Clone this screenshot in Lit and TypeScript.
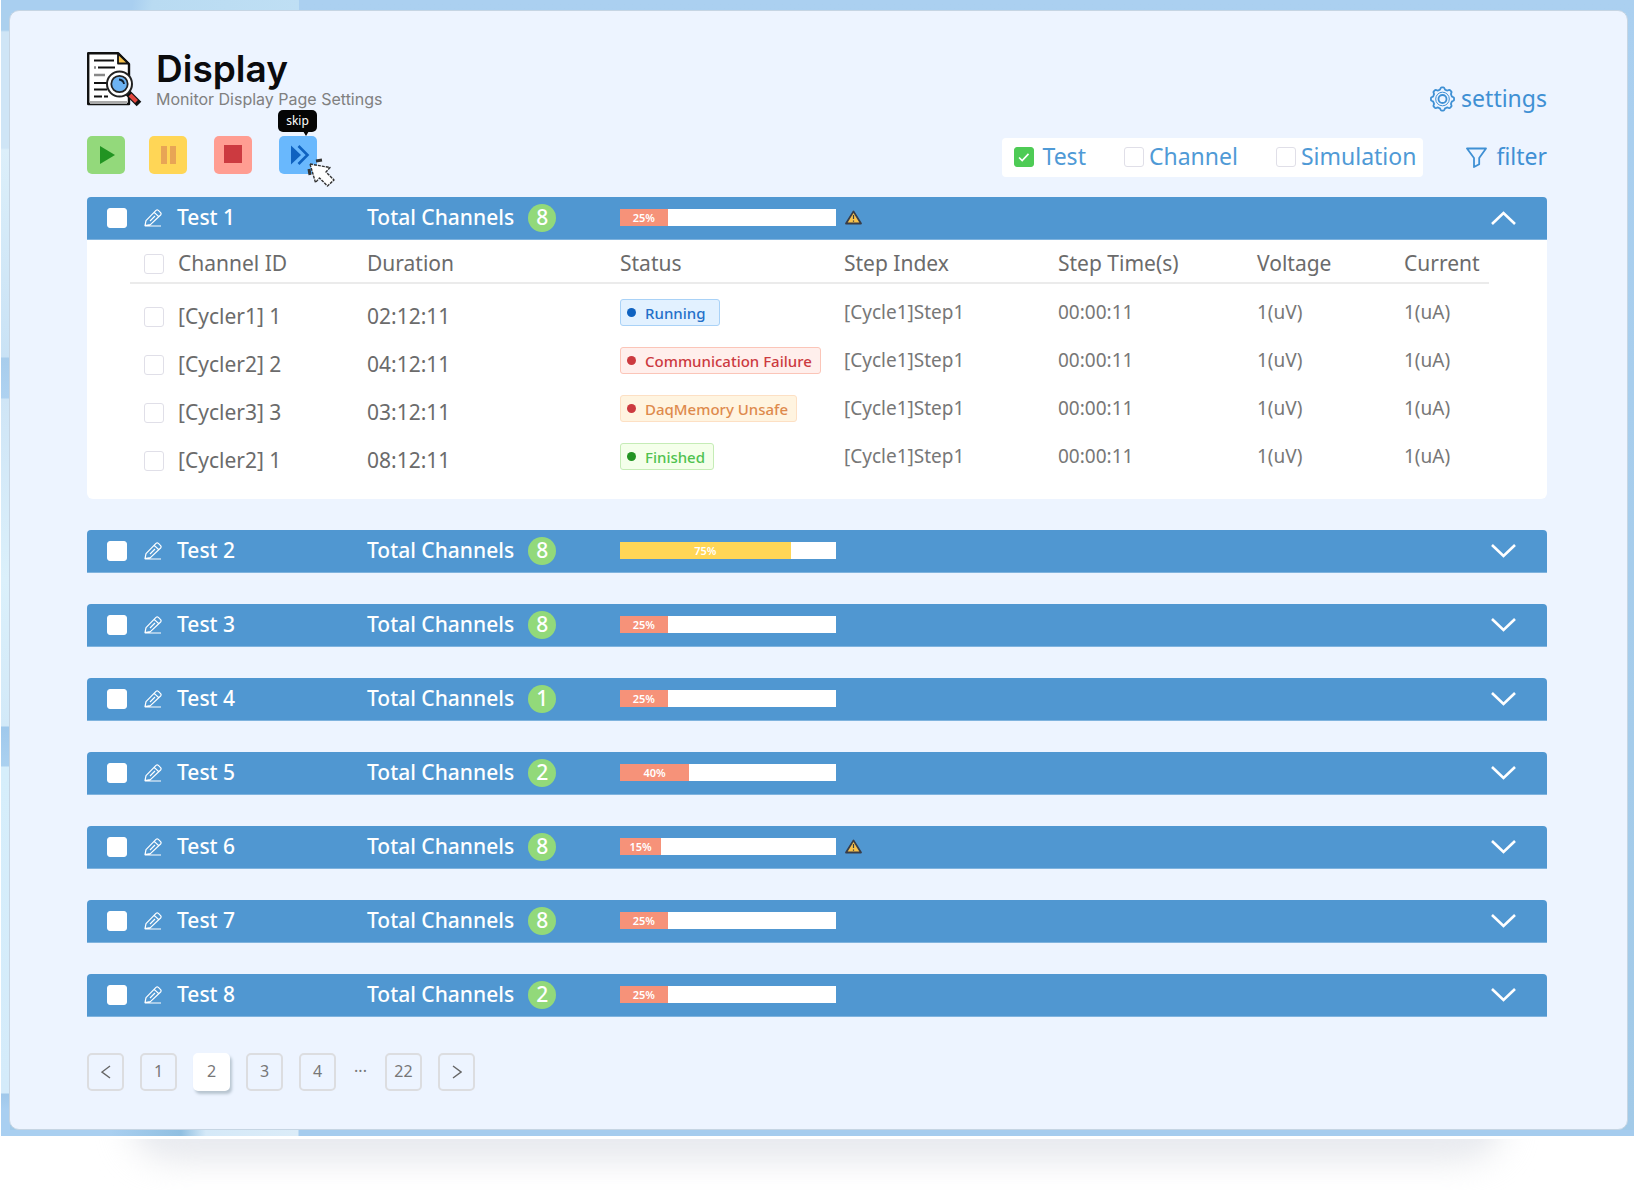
import { LitElement, html, svg, css, nothing } from "lit";
import { customElement, property } from "lit/decorators.js";
import { classMap } from "lit/directives/class-map.js";
import { styleMap } from "lit/directives/style-map.js";

interface Channel {
  id: string;
  duration: string;
  status: string;
  tone: "info" | "error" | "warn" | "ok";
}

interface TestGroup {
  name: string;
  total: number;
  percent: number;
  fill: number;
  caution?: boolean;
  amber?: boolean;
  channels?: Channel[];
}

const GROUPS: TestGroup[] = [
  {
    name: "Test 1", total: 8, percent: 25, fill: 22, caution: true,
    channels: [
      { id: "[Cycler1] 1", duration: "02:12:11", status: "Running", tone: "info" },
      { id: "[Cycler2] 2", duration: "04:12:11", status: "Communication Failure", tone: "error" },
      { id: "[Cycler3] 3", duration: "03:12:11", status: "DaqMemory Unsafe", tone: "warn" },
      { id: "[Cycler2] 1", duration: "08:12:11", status: "Finished", tone: "ok" },
    ],
  },
  { name: "Test 2", total: 8, percent: 75, fill: 79, amber: true },
  { name: "Test 3", total: 8, percent: 25, fill: 22 },
  { name: "Test 4", total: 1, percent: 25, fill: 22 },
  { name: "Test 5", total: 2, percent: 40, fill: 32 },
  { name: "Test 6", total: 8, percent: 15, fill: 19, caution: true },
  { name: "Test 7", total: 8, percent: 25, fill: 22 },
  { name: "Test 8", total: 2, percent: 25, fill: 22 },
];

const shared = css`
  * { box-sizing: border-box; }
  button {
    font: inherit;
    color: inherit;
    border: 0;
    padding: 0;
    background: none;
    cursor: pointer;
  }
  svg { display: block; }
  input[type="checkbox"] {
    appearance: none;
    flex: none;
    width: 20px;
    height: 20px;
    margin: 0;
    border: 1px solid #e0dfe8;
    border-radius: 3px;
    background: #fff;
  }
`;

@customElement("test-group")
class TestGroupPanel extends LitElement {
  @property({ attribute: false }) group!: TestGroup;

  static styles = [
    shared,
    css`
      :host { display: block; }
      .bar {
        display: grid;
        grid-template-columns: 260fr 253fr 871fr 25px;
        align-items: center;
        height: 43px;
        padding: 0 31px 0 20px;
        border-radius: 4px 4px 0 0;
        border-bottom: 1px solid #7fb3de;
        background: #5097d1;
        color: #fff;
        font-size: 21px;
        font-weight: 500;
      }
      .name, .total, .progress { display: flex; align-items: center; }
      .bar input { border-color: #fff; margin-right: 17px; }
      .edit { margin-right: 15px; }
      .count {
        display: grid;
        place-items: center;
        width: 28px;
        height: 28px;
        margin-left: 14px;
        border-radius: 50%;
        background: #92d97a;
      }
      .track { width: 216px; height: 17px; background: #fff; }
      .fill {
        height: 100%;
        background: #f69279;
        font-size: 11px;
        line-height: 17px;
        font-weight: 600;
        text-align: center;
      }
      .fill.amber { background: #ffd656; }
      .caution { margin-left: 8px; }
      .body {
        padding: 0 58px 18px 43px;
        border-radius: 0 0 6px 6px;
        background: #fff;
        color: #6b6b6b;
      }
      table {
        width: 100%;
        table-layout: fixed;
        border-collapse: collapse;
        text-align: left;
      }
      .c-id { width: 237px; }
      .c-duration { width: 253px; }
      .c-status { width: 224px; }
      .c-index { width: 214px; }
      .c-time { width: 199px; }
      .c-voltage { width: 147px; }
      .c-current { width: 85px; }
      th, td { padding: 0; white-space: nowrap; }
      th {
        height: 43px;
        padding-top: 6px;
        border-bottom: 2px solid #ebebeb;
        font-size: 21px;
        font-weight: 400;
      }
      td { height: 48px; font-size: 19px; color: #777; }
      .gap td { height: 6px; }
      .major { padding-top: 8px; font-size: 21px; color: #6b6b6b; }
      .pick { display: flex; align-items: center; gap: 14px; padding-left: 14px; }
      .tag {
        display: inline-flex;
        align-items: center;
        gap: 9px;
        height: 27px;
        padding: 0 8px 0 6px;
        border: 1px solid;
        border-radius: 3px;
        font-size: 15px;
        font-weight: 500;
        vertical-align: middle;
      }
      .dot { width: 9px; height: 9px; border-radius: 50%; background: #cc3a3f; }
      .info { background: #e2f1ff; border-color: #a9d2f7; color: #2470c9; padding-right: 14px; }
      .info .dot { background: #0f62c0; }
      .error { background: #ffefec; border-color: #fbc5b8; color: #cc3a3f; }
      .warn { background: #fff4e0; border-color: #fde0c4; color: #de8a4c; }
      .ok { background: #f4ffea; border-color: #c5ecb6; color: #4fc24f; }
      .ok .dot { background: #229422; }
    `,
  ];

  render() {
    const g = this.group;
    const open = Boolean(g.channels);
    return html`
      <div class="bar">
        <div class="name">
          <input type="checkbox" aria-label=${`Select ${g.name}`} />
          <button class="edit" aria-label=${`Rename ${g.name}`}>
            <svg width="18" height="18" viewBox="0 0 18 18" fill="none" stroke="#fff" stroke-width="1.2" stroke-linejoin="round">
              <path d="M1 16.6 2 11.6 12 1.4Q13.2.4 14.4 1.4L16.6 3.6Q17.6 4.8 16.6 6L6.4 15.6ZM10.2 3.4 14.8 7.8M6 12 11 7M1 17H17" />
            </svg>
          </button>
          <span>${g.name}</span>
        </div>
        <div class="total"><span>Total Channels</span><span class="count">${g.total}</span></div>
        <div class="progress">
          <div class="track">
            <div class=${classMap({ fill: true, amber: Boolean(g.amber) })} style=${styleMap({ width: `${g.fill}%` })}>${g.percent}%</div>
          </div>
          ${g.caution
            ? html`<svg class="caution" width="19" height="17" viewBox="0 0 19 17">
                <path d="M9.5 2.400 17 14.5H2Z" fill="#f6c14b" stroke="#383d49" stroke-width="1.800" stroke-linejoin="round" />
                <path d="M9.5 6V10M9.5 11.400V12.800" stroke="#383d49" stroke-width="1.200" />
              </svg>`
            : nothing}
        </div>
        <button aria-label=${open ? "Collapse" : "Expand"}>
          <svg width="25" height="14" viewBox="0 0 25 14" fill="none" stroke="#fff" stroke-width="2.6">
            <path d=${open ? "M1 13 12.5 2 24 13" : "M1 1 12.5 12 24 1"} />
          </svg>
        </button>
      </div>
      ${g.channels ? this.renderTable(g.channels) : nothing}
    `;
  }

  private renderTable(channels: Channel[]) {
    return html`
      <div class="body">
        <table>
          <colgroup>
            <col class="c-id" /><col class="c-duration" /><col class="c-status" /><col class="c-index" />
            <col class="c-time" /><col class="c-voltage" /><col class="c-current" />
          </colgroup>
          <thead>
            <tr>
              <th><label class="pick"><input type="checkbox" />Channel ID</label></th>
              <th>Duration</th>
              <th>Status</th>
              <th>Step Index</th>
              <th>Step Time(s)</th>
              <th>Voltage</th>
              <th>Current</th>
            </tr>
          </thead>
          <tbody>
            <tr class="gap" aria-hidden="true"><td colspan="7"></td></tr>
            ${channels.map(
              (c) => html`<tr>
                <td class="major"><label class="pick"><input type="checkbox" />${c.id}</label></td>
                <td class="major">${c.duration}</td>
                <td><span class="tag ${c.tone}"><span class="dot"></span>${c.status}</span></td>
                <td>[Cycle1]Step1</td>
                <td>00:00:11</td>
                <td>1(uV)</td>
                <td>1(uA)</td>
              </tr>`
            )}
          </tbody>
        </table>
      </div>
    `;
  }
}

/** Outline of a cog with rounded lobes, centred on (cx, cy). */
function cogPath(cx: number, cy: number, radius: number, depth: number, teeth: number): string {
  const points: string[] = [];
  const steps = teeth * 12;
  for (let i = 0; i < steps; i++) {
    const a = (i / steps) * Math.PI * 2;
    const r = radius + depth * Math.max(-0.8, Math.min(0.8, Math.cos(a * teeth) * 1.4));
    points.push(`${(cx + r * Math.sin(a)).toFixed(2)} ${(cy - r * Math.cos(a)).toFixed(2)}`);
  }
  return `M${points.join("L")}Z`;
}

@customElement("app-root")
class AppRoot extends LitElement {
  static styles = [
    shared,
    css`
      :host {
        display: flex;
        flex-direction: column;
        min-height: 100vh;
        background: #fff;
        font-family: "Noto Sans", "Open Sans", sans-serif;
        line-height: 1.2;
      }
      .backdrop {
        margin-left: 1px;
        padding: 10px 6px 6px 8px;
        background:
          linear-gradient(100deg, #a9cff0 130px, #b9dbf2 150px, #bfdff4) 0 0 / 298px 10px no-repeat,
          linear-gradient(#abd0ee 30px, #cfe5f6 32px 148px, #dceffa 150px, #c9e2f5 357px,
            #a8cdec 358px, #aed2f1 398px, #cfe5f6 399px, #dbf0fb 580px, #d2e9f8 726px,
            #a0c9ec 727px, #abd1f0 766px, #d6eefb 767px, #d4ebfa 1093px, #a0c8ea 1094px, #a9cff1 1110px)
            0 0 / 9px 100% no-repeat,
          linear-gradient(90deg, #a9cff0 110px, #90bfe1 180px, #d5e9f8 205px, #dbecf8 297px, #a5ccee 298px)
            0 100% / 100% 6px no-repeat,
          linear-gradient(#abd0f0, #a2cae8);
      }
      .panel {
        display: flex;
        flex-direction: column;
        padding: 40px 80px 38px 77px;
        border: 1px solid #c6d5e3;
        border-radius: 10px;
        background: #edf4ff;
      }
      .floor {
        position: relative;
        flex: 1;
        min-height: 40px;
        margin-top: 3px;
        overflow: hidden;
      }
      .floor::before {
        content: "";
        position: absolute;
        top: -40px;
        left: 140px;
        right: 140px;
        height: 50px;
        border-radius: 30px;
        box-shadow: 0 0 40px #d3d6dd;
        background: #e9ebf0;
        filter: blur(10px);
      }
      header { display: flex; align-items: flex-start; justify-content: space-between; }
      .brand { display: flex; gap: 14px; }
      .brand svg { margin-top: 1px; }
      h1 {
        margin: 0;
        font: 600 37px/36px Inter, sans-serif;
        color: #0b0b0d;
      }
      .subtitle { margin: 2px 0 0; font: 400 16px/20px Inter, sans-serif; color: #808080; }
      .link {
        display: inline-flex;
        align-items: center;
        gap: 6px;
        color: #3f90d4;
        font-size: 23px;
      }
      .settings { margin-top: 34px; }
      .filter { gap: 9px; }
      .toolbar {
        display: flex;
        align-items: flex-start;
        justify-content: space-between;
        margin: 23px 0 20px;
      }
      .actions { display: grid; grid-template-columns: 62px 65px 65px 38px; height: 38px; }
      .action {
        display: grid;
        place-items: center;
        width: 38px;
        height: 38px;
        border-radius: 5px;
      }
      .play { background: #93d97b; }
      .pause { background: #ffd656; }
      .stop { background: #ff9d92; }
      .skip { position: relative; background: #69b8fd; }
      .tip {
        position: absolute;
        left: -1px;
        bottom: 42px;
        width: 39px;
        height: 22px;
        border-radius: 5px;
        background: #050505;
        color: #fff;
        font-size: 12px;
        line-height: 21px;
        text-align: center;
      }
      .tip::after {
        content: "";
        position: absolute;
        left: 25px;
        top: 21px;
        border: 3px solid transparent;
        border-top: 5px solid #050505;
        border-bottom: 0;
      }
      .pointer { position: absolute; left: 28px; top: 22px; }
      .right { display: flex; align-items: center; gap: 43px; margin-top: 2px; }
      .kinds {
        display: flex;
        align-items: center;
        gap: 38px;
        height: 39px;
        padding: 0 7px 0 12px;
        border-radius: 4px;
        background: #fff;
        color: #4f9ad6;
        font-size: 23px;
      }
      .kinds label { display: flex; align-items: center; gap: 5px; }
      .kinds label:first-child { gap: 8px; }
      .kinds input:checked {
        border-color: #4ecb55;
        background: #4ecb55
          url("data:image/svg+xml,%3Csvg xmlns='http://www.w3.org/2000/svg' viewBox='0 0 20 20'%3E%3Cpath d='M4.500 10.500 8 14 15 6.500' fill='none' stroke='white' stroke-width='1.800'/%3E%3C/svg%3E");
      }
      .groups { display: flex; flex-direction: column; gap: 31px; }
      .pager {
        display: flex;
        align-items: center;
        gap: 16px;
        margin-top: 36px;
        color: #777;
        font-size: 16px;
      }
      .page {
        display: grid;
        place-items: center;
        width: 37px;
        height: 38px;
        border: 2px solid #dcdde0;
        border-radius: 5px;
      }
      .page.current {
        border-color: #fff;
        background: #fff;
        box-shadow: 2px 3px 3px #b7c4d0;
      }
      .dots { width: 17px; text-align: center; }
    `,
  ];

  render() {
    return html`
      <div class="backdrop">
        <main class="panel">
          <header>
            <div class="brand">
              <svg width="55" height="55" viewBox="0 0 55 55" fill="none">
                <path d="M1.200 1.200H31L42 12V52H1.200Z" fill="#fff" stroke="#111" stroke-width="2.400" stroke-linejoin="round" />
                <path d="M3 50.500H40" stroke="#aaa" stroke-width="3" />
                <path d="M31 1.500V11.500H41.500Z" fill="#f6c14b" stroke="#111" stroke-width="1.800" stroke-linejoin="round" />
                <path d="M7 8.500H27M11 15.500H28M7 31H20M7 37.500H20M7 44.500H15M17 44.500H21" stroke="#111" stroke-width="2" />
                <path d="M7 15.500H9M7 23H18" stroke="#888" stroke-width="2.600" />
                <path d="M41 41 52 52" stroke="#111" stroke-width="6.500" />
                <path d="M43 43 49.500 49.500" stroke="#e2473f" stroke-width="4" />
                <circle cx="32.500" cy="32" r="12.500" fill="#fff" stroke="#222" stroke-width="2" />
                <circle cx="32.500" cy="32" r="8.200" fill="#6db3f2" stroke="#222" stroke-width="1.800" />
                <path d="M32 27.500Q36.500 28 37 32" stroke="#123" stroke-width="1.800" />
              </svg>
              <div>
                <h1>Display</h1>
                <p class="subtitle">Monitor Display Page Settings</p>
              </div>
            </div>
            <button class="link settings">
              <svg width="25" height="26" viewBox="0 0 25 26" fill="none" stroke="#3f90d4" stroke-width="1.800">
                <path d=${cogPath(12.5, 13, 10.6, 1.2, 8)} />
                <circle cx="12.500" cy="13" r="6.800" stroke-width="1" />
                <circle cx="12.500" cy="13" r="4" />
              </svg>
              settings
            </button>
          </header>

          <div class="toolbar">
            <div class="actions">
              <button class="action play" aria-label="Play">
                <svg width="38" height="38" viewBox="0 0 38 38"><path d="M13 10V28L28 19Z" fill="#229422" /></svg>
              </button>
              <button class="action pause" aria-label="Pause">
                <svg width="38" height="38" viewBox="0 0 38 38"><path d="M12 10H18V28H12ZM21 10H27V28H21Z" fill="#e8a555" /></svg>
              </button>
              <button class="action stop" aria-label="Stop">
                <svg width="38" height="38" viewBox="0 0 38 38"><path d="M10 9H28V27H10Z" fill="#cc3a40" /></svg>
              </button>
              <button class="action skip" aria-label="Skip">
                <svg width="38" height="38" viewBox="0 0 38 38">
                  <path d="M12 9.500V28.500L22 19Z" fill="#0f62c0" />
                  <path d="M19.500 10 28.500 19 19.500 28" fill="none" stroke="#0f62c0" stroke-width="2.600" />
                </svg>
                <span class="tip">skip</span>
                <svg class="pointer" width="29" height="30" viewBox="0 0 29 30">
                  <path d="M3 6 23 9.500 19 14 27 22 20.500 28 12.500 20 8.500 24.500Z" fill="#fff" stroke="#333" stroke-width="1.400" stroke-linejoin="round" stroke-dasharray="3 1" />
                  <path d="M9 3 15 2M2 11 3 17" stroke="#333" stroke-width="3" />
                </svg>
              </button>
            </div>
            <div class="right">
              <div class="kinds">
                <label><input type="checkbox" checked />Test</label>
                <label><input type="checkbox" />Channel</label>
                <label><input type="checkbox" />Simulation</label>
              </div>
              <button class="link filter">
                <svg width="21" height="21" viewBox="0 0 21 21" fill="none" stroke="#3f90d4" stroke-width="1.800" stroke-linejoin="round">
                  <path d="M1 1.500H20L13.200 11V17.200L8 20V11Z" />
                </svg>
                filter
              </button>
            </div>
          </div>

          <section class="groups">
            ${GROUPS.map((g) => html`<test-group .group=${g}></test-group>`)}
          </section>

          <nav class="pager" aria-label="Pages">
            <button class="page" aria-label="Previous page">${this.arrow("M9 1 1 7 9 13")}</button>
            <button class="page">1</button>
            <button class="page current" aria-current="page">2</button>
            <button class="page">3</button>
            <button class="page">4</button>
            <span class="dots">···</span>
            <button class="page">22</button>
            <button class="page" aria-label="Next page">${this.arrow("M1 1 9 7 1 13")}</button>
          </nav>
        </main>
      </div>
      <div class="floor"></div>
    `;
  }

  private arrow(d: string) {
    return html`<svg width="10" height="14" viewBox="0 0 10 14" fill="none" stroke="#666" stroke-width="1.400">
      ${svg`<path d=${d} />`}
    </svg>`;
  }
}
